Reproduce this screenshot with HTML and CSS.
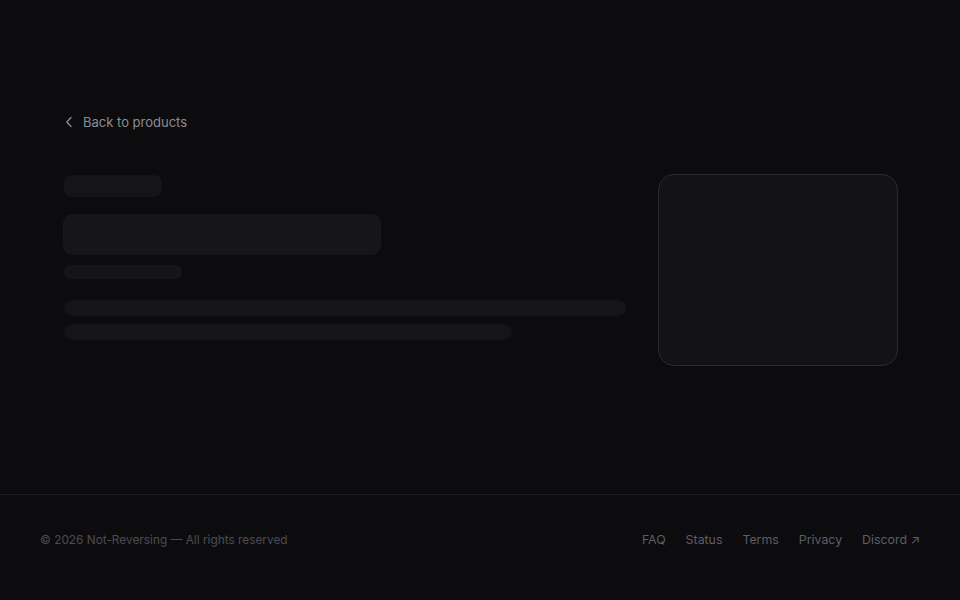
FILE: index.html
```html
<!DOCTYPE html>
<html lang="en">
<head>
<meta charset="utf-8">
<title>Product</title>
<link rel="stylesheet" href="styles.css">
</head>
<body>
<div class="page">
  <main class="main">
    <a class="back" href="#">
      <svg class="chev" width="8" height="12" viewBox="0 0 8 12"><path d="M6 1.5 L1.8 6 L6 10.5" fill="none" stroke="currentColor" stroke-width="1.3" stroke-linecap="round" stroke-linejoin="round"/></svg>
      <span>Back to products</span>
    </a>
    <section class="product">
      <div class="info">
        <div class="sk sk-badge"></div>
        <div class="sk sk-title"></div>
        <div class="sk sk-sub"></div>
        <div class="desc">
          <div class="sk sk-line"></div>
          <div class="sk sk-line short"></div>
        </div>
      </div>
      <div class="media"></div>
    </section>
  </main>
  <footer class="footer">
    <span class="copy">© 2026 Not-Reversing — All rights reserved</span>
    <nav class="links">
      <a href="#">FAQ</a>
      <a href="#">Status</a>
      <a href="#">Terms</a>
      <a href="#">Privacy</a>
      <a href="#">Discord ↗</a>
    </nav>
  </footer>
</div>
</body>
</html>
```

FILE: styles.css
```css
* { box-sizing: border-box; }
html, body { margin: 0; padding: 0; background: #0c0c0e; }
body { font-family: Inter, "Noto Sans", sans-serif; color: #8a8a90; }
.page { width: 960px; height: 600px; display: flex; flex-direction: column; }
.main { height: 494px; padding: 112px 62px 0 64px; }
.back { display: inline-flex; align-items: center; gap: 10px; color: #8d8d93; text-decoration: none; font-size: 13px; line-height: 16px; }
.chev { margin-left: 1px; color: #8d8d93; }
.product { display: flex; justify-content: space-between; margin-top: 42px; }
.info { width: 562px; padding-top: 1px; }
.sk { background: #151518; border-radius: 8px; }
.sk-badge { width: 98px; height: 22px; }
.sk-title { width: 318px; height: 41px; margin-top: 17px; margin-left: -1px; border-radius: 9px; background: #161619; }
.sk-sub { width: 118px; height: 14px; margin-top: 10px; border-radius: 7px; }
.desc { margin-top: 21px; display: flex; flex-direction: column; gap: 8px; }
.sk-line { width: 562px; height: 16px; border-radius: 8px; }
.sk-line.short { width: 448px; }
.media { width: 240px; height: 192px; border: 1px solid #2b2b2f; border-radius: 16px; background: #131316; }
.footer { flex: 1; border-top: 1px solid #1f1f23; display: flex; justify-content: space-between; align-items: center; padding: 0 40px 16px 40px; }
.copy { color: #4c4c52; font-size: 11.85px; }
.links { display: flex; gap: 20px; font-size: 12.35px; }
.links a { color: #5e5e64; text-decoration: none; }
```
